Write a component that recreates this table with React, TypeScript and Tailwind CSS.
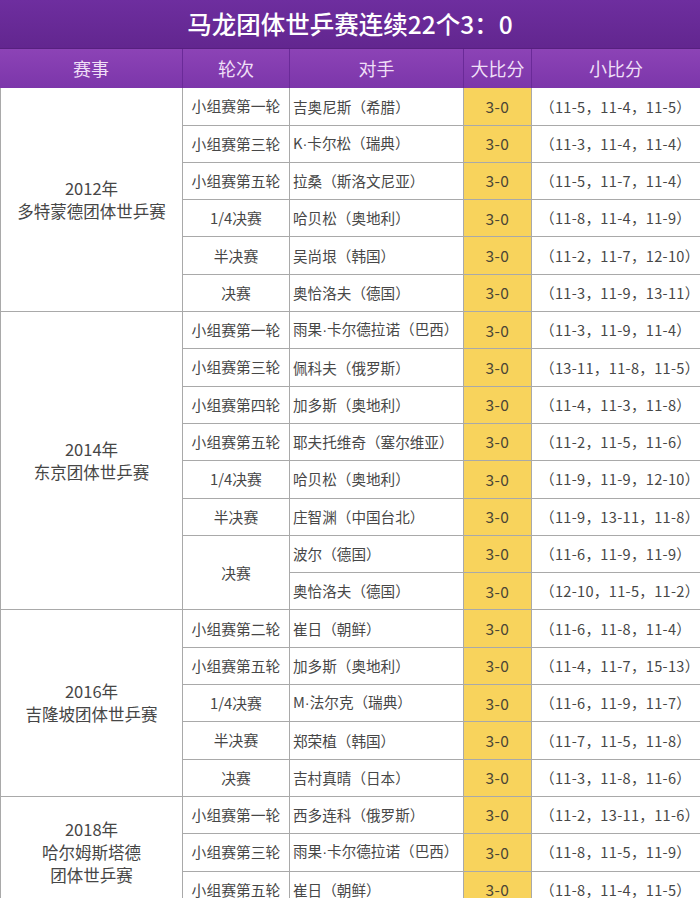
import React from "react";

type Row = { round?: string; span?: number; opp: string; big: string; small: string };
type Group = { lines: string[]; rows: Row[] };

const groups: Group[] = [
  {
    lines: ["2012年", "多特蒙德团体世乒赛"],
    rows: [
      { round: "小组赛第一轮", opp: "吉奥尼斯（希腊）", big: "3-0", small: "（11-5，11-4，11-5）" },
      { round: "小组赛第三轮", opp: "K·卡尔松（瑞典）", big: "3-0", small: "（11-3，11-4，11-4）" },
      { round: "小组赛第五轮", opp: "拉桑（斯洛文尼亚）", big: "3-0", small: "（11-5，11-7，11-4）" },
      { round: "1/4决赛", opp: "哈贝松（奥地利）", big: "3-0", small: "（11-8，11-4，11-9）" },
      { round: "半决赛", opp: "吴尚垠（韩国）", big: "3-0", small: "（11-2，11-7，12-10）" },
      { round: "决赛", opp: "奥恰洛夫（德国）", big: "3-0", small: "（11-3，11-9，13-11）" },
    ],
  },
  {
    lines: ["2014年", "东京团体世乒赛"],
    rows: [
      { round: "小组赛第一轮", opp: "雨果·卡尔德拉诺（巴西）", big: "3-0", small: "（11-3，11-9，11-4）" },
      { round: "小组赛第三轮", opp: "佩科夫（俄罗斯）", big: "3-0", small: "（13-11，11-8，11-5）" },
      { round: "小组赛第四轮", opp: "加多斯（奥地利）", big: "3-0", small: "（11-4，11-3，11-8）" },
      { round: "小组赛第五轮", opp: "耶夫托维奇（塞尔维亚）", big: "3-0", small: "（11-2，11-5，11-6）" },
      { round: "1/4决赛", opp: "哈贝松（奥地利）", big: "3-0", small: "（11-9，11-9，12-10）" },
      { round: "半决赛", opp: "庄智渊（中国台北）", big: "3-0", small: "（11-9，13-11，11-8）" },
      { round: "决赛", span: 2, opp: "波尔（德国）", big: "3-0", small: "（11-6，11-9，11-9）" },
      { opp: "奥恰洛夫（德国）", big: "3-0", small: "（12-10，11-5，11-2）" },
    ],
  },
  {
    lines: ["2016年", "吉隆坡团体世乒赛"],
    rows: [
      { round: "小组赛第二轮", opp: "崔日（朝鲜）", big: "3-0", small: "（11-6，11-8，11-4）" },
      { round: "小组赛第五轮", opp: "加多斯（奥地利）", big: "3-0", small: "（11-4，11-7，15-13）" },
      { round: "1/4决赛", opp: "M·法尔克（瑞典）", big: "3-0", small: "（11-6，11-9，11-7）" },
      { round: "半决赛", opp: "郑荣植（韩国）", big: "3-0", small: "（11-7，11-5，11-8）" },
      { round: "决赛", opp: "吉村真晴（日本）", big: "3-0", small: "（11-3，11-8，11-6）" },
    ],
  },
  {
    lines: ["2018年", "哈尔姆斯塔德", "团体世乒赛"],
    rows: [
      { round: "小组赛第一轮", opp: "西多连科（俄罗斯）", big: "3-0", small: "（11-2，13-11，11-6）" },
      { round: "小组赛第三轮", opp: "雨果·卡尔德拉诺（巴西）", big: "3-0", small: "（11-8，11-5，11-9）" },
      { round: "小组赛第五轮", opp: "崔日（朝鲜）", big: "3-0", small: "（11-8，11-4，11-5）" },
    ],
  },
];

const spanClass: Record<number, string> = {
  1: "row-span-1",
  2: "row-span-2",
  3: "row-span-3",
  5: "row-span-5",
  6: "row-span-6",
  8: "row-span-8",
};

const font = { fontFamily: '"Noto Sans CJK SC", "Noto Sans", sans-serif' };

function Opp({ text }: { text: string }) {
  const parts = text.split("·");
  return (
    <>
      {parts.map((p, i) => (
        <React.Fragment key={i}>
          {i > 0 && <span className="font-['Liberation_Sans',sans-serif]">·</span>}
          {p}
        </React.Fragment>
      ))}
    </>
  );
}

export default function App() {
  return (
    <div className="w-[700px] bg-white" style={font}>
      <div className="h-[49px] flex items-center justify-center bg-gradient-to-b from-[#6e2e9f] to-[#62268f] text-white text-[24.5px] font-medium border-b border-[#57207f]">
        马龙团体世乒赛连续22个3：0
      </div>
      <div className="h-[39.3px] grid grid-cols-[182px_106px_173px_67px_1fr] gap-x-px bg-[#6a2a98] text-[#efdff7] text-[18px]">
        {["赛事", "轮次", "对手", "大比分", "小比分"].map((h) => (
          <div key={h} className="flex items-center justify-center bg-gradient-to-b from-[#8c43b6] to-[#7c36aa]">
            {h}
          </div>
        ))}
      </div>
      <div className="grid grid-cols-[181px_106px_173px_67px_1fr] auto-rows-[36.3px] gap-px bg-[#a9a9a9] border-l border-[#a9a9a9] text-[#474747]">
        {groups.map((g, gi) => (
          <React.Fragment key={gi}>
            <div
              className={`col-start-1 ${spanClass[g.rows.length]} bg-white flex flex-col items-center justify-center text-[16.5px] leading-[23px] text-[#464646]`}
            >
              {g.lines.map((l) => (
                <div key={l}>{l}</div>
              ))}
            </div>
            {g.rows.map((r, ri) => (
              <React.Fragment key={ri}>
                {r.round !== undefined && (
                  <div
                    className={`col-start-2 ${spanClass[r.span ?? 1]} bg-white flex items-center justify-center text-[14.8px]`}
                  >
                    {r.round}
                  </div>
                )}
                <div className="col-start-3 bg-white flex items-center pl-[3px] text-[14.6px] whitespace-nowrap overflow-hidden">
                  <span>
                    <Opp text={r.opp} />
                  </span>
                </div>
                <div className="col-start-4 bg-[#f8d35c] flex items-center justify-center text-[15.5px] tracking-[0.4px] text-[#4a4535]">
                  {r.big}
                </div>
                <div className="col-start-5 bg-white flex items-center pl-[8px] text-[14.6px] tracking-[0.3px] whitespace-nowrap">
                  {r.small}
                </div>
              </React.Fragment>
            ))}
          </React.Fragment>
        ))}
      </div>
    </div>
  );
}
